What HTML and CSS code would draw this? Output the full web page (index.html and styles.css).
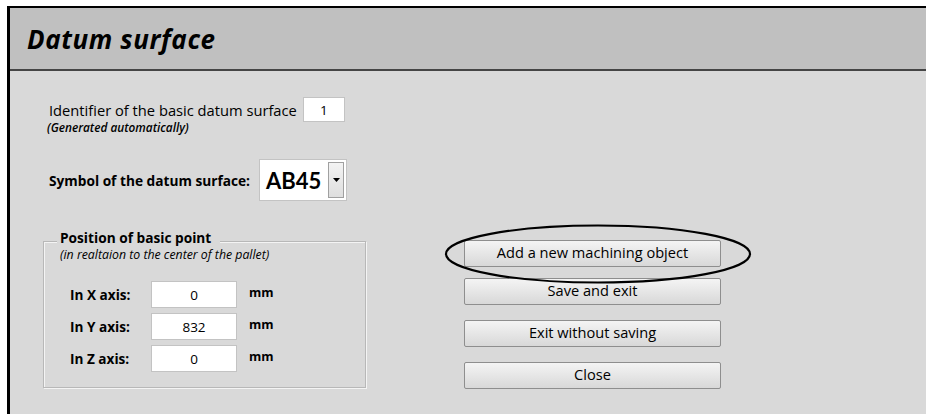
FILE: index.html
```html
<!DOCTYPE html>
<html>
<head>
<meta charset="utf-8">
<title>Datum surface</title>
<link rel="stylesheet" href="styles.css">
</head>
<body>
<div class="window">
  <header class="titlebar">
    <h1 class="title">Datum surface</h1>
  </header>
  <main class="content">
    <section class="form-col">
      <div class="ident-row">
        <span class="label">Identifier of the basic datum surface</span>
        <span class="field ident-field">1</span>
      </div>
      <div class="note">(Generated automatically)</div>

      <div class="symbol-row">
        <span class="label bold">Symbol of the datum surface:</span>
        <div class="combo">
          <span class="combo-value">AB45</span>
          <span class="combo-btn">
            <svg width="7" height="4" viewBox="0 0 7 4"><path d="M0 0h7L3.5 4z" fill="#000"/></svg>
          </span>
        </div>
      </div>

      <div class="group">
        <div class="group-title">Position of basic point</div>
        <div class="group-note">(in realtaion to the center of the pallet)</div>
        <div class="axes">
          <div class="axis-row">
            <span class="axis-label">In X axis:</span>
            <span class="field axis-field">0</span>
            <span class="unit">mm</span>
          </div>
          <div class="axis-row">
            <span class="axis-label">In Y axis:</span>
            <span class="field axis-field">832</span>
            <span class="unit">mm</span>
          </div>
          <div class="axis-row">
            <span class="axis-label">In Z axis:</span>
            <span class="field axis-field">0</span>
            <span class="unit">mm</span>
          </div>
        </div>
      </div>
    </section>

    <section class="actions">
      <div class="highlight-wrap">
        <button class="btn">Add a new machining object</button>
        <svg class="highlight" width="310" height="62" viewBox="0 0 310 62">
          <ellipse cx="155" cy="31" rx="152" ry="28.5" fill="none" stroke="#000" stroke-width="2.2"/>
        </svg>
      </div>
      <button class="btn btn-save">Save and exit</button>
      <button class="btn btn-gap">Exit without saving</button>
      <button class="btn btn-gap">Close</button>
    </section>
  </main>
</div>
</body>
</html>
```

FILE: styles.css
```css
html, body {
  margin: 0;
  padding: 0;
  background: #ffffff;
  height: 100%;
  overflow: hidden;
}

body {
  font-family: "Open Sans", Lato, sans-serif;
  color: #000;
}

.window {
  margin: 6px 0 0 7px;
  border-top: 2px solid #000;
  border-left: 3px solid #000;
  background: #d9d9d9;
  height: 420px;
}

.titlebar {
  height: 61px;
  background: #c0c0c0;
  border-bottom: 2px solid #454545;
  display: flex;
  align-items: center;
  padding-left: 17px;
}

.title {
  margin: 0;
  font-size: 26px;
  font-weight: 700;
  font-style: italic;
  letter-spacing: 0.6px;
}

.content {
  display: grid;
  grid-template-columns: 454px 257px;
}

.form-col {
  display: flex;
  flex-direction: column;
  padding-top: 26px;
}

.ident-row {
  display: flex;
  align-items: center;
  margin-left: 39px;
}

.label {
  font-size: 14.7px;
}

.bold {
  font-weight: 700;
  font-size: 13.7px;
}

.field {
  background: #fff;
  border: 1px solid #c3c3c3;
  box-sizing: border-box;
  font-size: 13.5px;
  text-align: center;
  display: inline-flex;
  align-items: center;
  justify-content: center;
}

.ident-field {
  width: 42px;
  height: 25px;
  margin-left: 6px;
}

.note {
  margin: -3px 0 0 37px;
  font-size: 11.8px;
  font-weight: 600;
  font-style: italic;
  line-height: 16px;
}

.symbol-row {
  display: flex;
  align-items: center;
  margin: 24px 0 0 39px;
}

.combo {
  margin-left: 9px;
  width: 88px;
  height: 42px;
  box-sizing: border-box;
  background: #fff;
  border: 1px solid #c3c3c3;
  display: flex;
  align-items: center;
  padding: 0 2px 0 6px;
}

.combo-value {
  font-family: Lato, "Open Sans", sans-serif;
  font-size: 22px;
  font-weight: 700;
  flex: 1;
}

.combo-btn {
  width: 16px;
  height: 36px;
  box-sizing: border-box;
  border: 1px solid #a0a0a0;
  background: linear-gradient(#f3f3f3, #dedede);
  display: flex;
  align-items: center;
  justify-content: center;
}

.group {
  margin: 40px 0 0 33px;
  width: 323px;
  height: 147px;
  box-sizing: border-box;
  border: 1px solid #b8b8b8;
  box-shadow: inset 1px 1px 0 #f4f4f4, 1px 1px 0 #f4f4f4;
  padding: 0 0 0 16px;
  display: flex;
  flex-direction: column;
  align-items: flex-start;
}

.group-title {
  margin: -13px 0 0 -3px;
  padding: 0 9px 0 3px;
  background: #d9d9d9;
  font-size: 13.7px;
  font-weight: 700;
  line-height: 18px;
}

.group-note {
  margin-top: 1px;
  font-size: 12.3px;
  font-style: italic;
  line-height: 14px;
}

.axes {
  display: flex;
  flex-direction: column;
  gap: 5px;
  margin-top: 19px;
}

.axis-row {
  display: flex;
  align-items: center;
}

.axis-label {
  width: 81px;
  padding-left: 10px;
  font-size: 13.6px;
  font-weight: 700;
}

.axis-field {
  width: 86px;
  height: 27px;
}

.unit {
  margin-left: 12px;
  font-size: 12.5px;
  font-weight: 700;
  margin-top: -5px;
}

.actions {
  display: flex;
  flex-direction: column;
  padding-top: 169px;
}

.btn {
  width: 257px;
  height: 27px;
  box-sizing: border-box;
  border: 1px solid #8e8e8e;
  border-radius: 2px;
  background: linear-gradient(#f4f4f4, #e6e6e6 50%, #d8d8d8);
  font-family: "Open Sans", Lato, sans-serif;
  font-size: 14.6px;
  color: #000;
  padding: 0 0 3px;
}

.highlight-wrap {
  position: relative;
}

.highlight {
  position: absolute;
  left: -21px;
  top: -17px;
  pointer-events: none;
}

.btn-save {
  margin-top: 11px;
}

.btn-gap {
  margin-top: 15px;
}
```
